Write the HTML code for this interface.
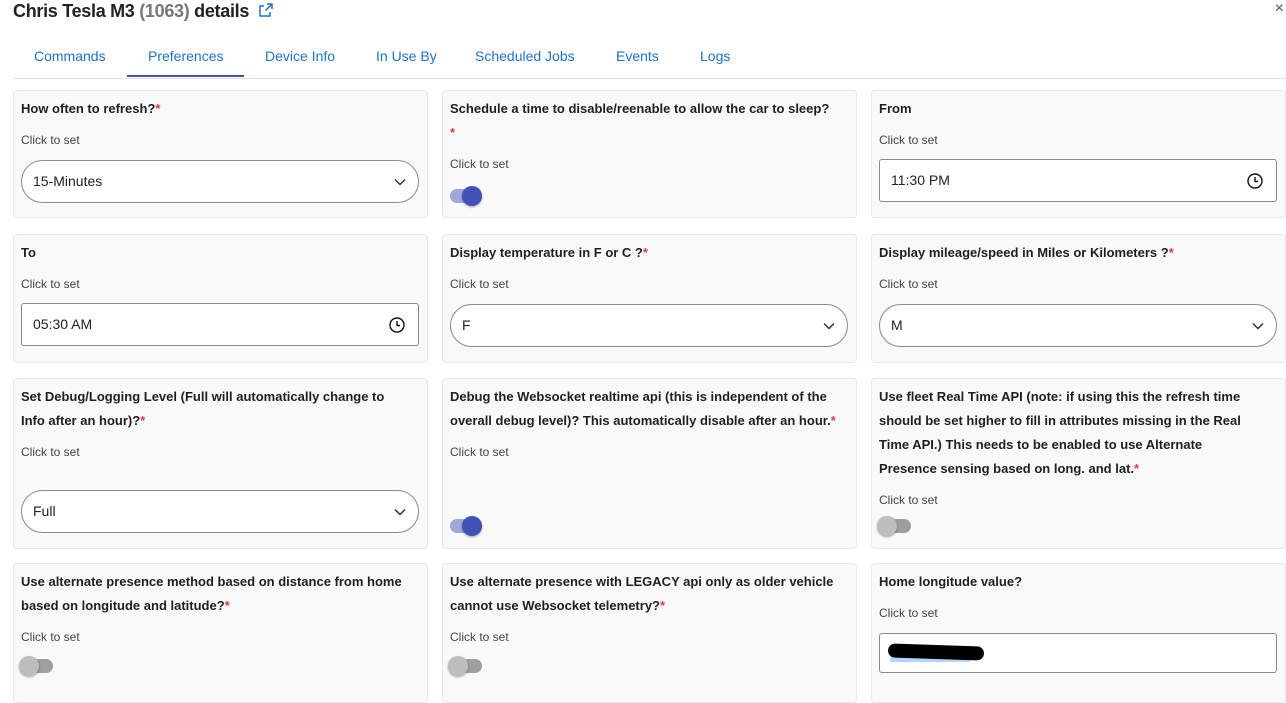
<!DOCTYPE html>
<html><head><meta charset="utf-8"><style>
*{box-sizing:border-box;margin:0;padding:0}
body{width:1286px;height:690px;overflow:hidden;background:#fff;font-family:"Liberation Sans",Arial,sans-serif;position:relative;color:#1f1f1f}
.title{position:absolute;left:13px;top:1px;font-size:18px;font-weight:bold;letter-spacing:-0.3px;color:#222}
.title .g{color:#777;font-weight:bold}
.tabs{position:absolute;left:13px;top:40px;width:1273px;height:39px;border-bottom:1px solid #e0e0e0}
.tab{position:absolute;top:8px;font-size:14px;color:#1e73c8}
.ind{position:absolute;left:114px;top:35px;width:117px;height:2px;background:#3f51b5}
.card{position:absolute;background:#f9f9f9;border:1px solid #e8e8e8;border-radius:4px;padding:0 8px}
.card h4{position:absolute;left:7px;top:6px;right:2px;font-size:13px;font-weight:bold;line-height:24px;color:#1f1f1f;white-space:nowrap}
.r{color:#e53935}
.lab{position:absolute;left:7px;font-size:12px;color:#444}
.sel{position:absolute;left:7px;right:8px;height:43px;border:1px solid #8a8a8a;border-radius:22px;background:#fff;font-size:14px;padding-left:11px;line-height:41px}
.sel svg{position:absolute;right:11px;top:14px}
.inp{position:absolute;left:7px;right:8px;height:43px;border:1px solid #8a8a8a;border-radius:3px;background:#fff;font-size:14px;padding-left:11px;line-height:41px}
.inp svg{position:absolute;right:12px;top:12px}
.tg{position:absolute;left:7px;width:32px;height:14px;border-radius:7px}
.tg i{position:absolute;top:-3px;width:20px;height:20px;border-radius:50%;box-shadow:0 1px 2px rgba(0,0,0,.35)}
.on{background:#9fa8da}.on i{left:12px;background:#3f51b5}
.off{background:#9e9e9e}.off i{left:-2px;background:#bdbdbd}
</style></head><body>
<div class="title">Chris Tesla M3 <span class="g">(1063)</span> details
<svg width="16" height="16" viewBox="0 0 16 16" style="vertical-align:-1px;margin-left:4px"><path d="M9 2h5v5M14 2L7.5 8.5M12 10v4H2V4h4" fill="none" stroke="#1e73c8" stroke-width="1.5"/></svg></div>
<div style="position:absolute;right:2px;top:0;font-size:16px;color:#555">×</div>
<div class="tabs">
<span class="tab" style="left:21px">Commands</span>
<span class="tab" style="left:135px">Preferences</span>
<span class="tab" style="left:252px">Device Info</span>
<span class="tab" style="left:363px">In Use By</span>
<span class="tab" style="left:462px">Scheduled Jobs</span>
<span class="tab" style="left:603px">Events</span>
<span class="tab" style="left:687px">Logs</span>
<div class="ind"></div></div>

<div class="card" style="left:13px;top:90px;width:415px;height:128px"><h4>How often to refresh?<span class="r">*</span></h4><div class="lab" style="top:42px">Click to set</div>
<div class="sel" style="top:69px">15-Minutes<svg width="14" height="14" viewBox="0 0 14 14"><path d="M2 4.5l5 5 5-5" fill="none" stroke="#333" stroke-width="1.5"/></svg></div></div>
<div class="card" style="left:442px;top:90px;width:415px;height:128px"><h4>Schedule a time to disable/reenable to allow the car to sleep?<br><span class="r">*</span></h4><div class="lab" style="top:66px">Click to set</div><div class="tg on" style="top:98px"><i></i></div></div>
<div class="card" style="left:871px;top:90px;width:415px;height:128px"><h4>From</h4><div class="lab" style="top:42px">Click to set</div>
<div class="inp" style="top:68px">11:30 PM<svg width="18" height="18" viewBox="0 0 18 18"><circle cx="9" cy="9" r="7" fill="none" stroke="#111" stroke-width="1.4"/><path d="M9 5v4.5h3" fill="none" stroke="#111" stroke-width="1.4"/></svg></div></div>

<div class="card" style="left:13px;top:234px;width:415px;height:129px"><h4>To</h4><div class="lab" style="top:42px">Click to set</div>
<div class="inp" style="top:68px">05:30 AM<svg width="18" height="18" viewBox="0 0 18 18"><circle cx="9" cy="9" r="7" fill="none" stroke="#111" stroke-width="1.4"/><path d="M9 5v4.5h3" fill="none" stroke="#111" stroke-width="1.4"/></svg></div></div>
<div class="card" style="left:442px;top:234px;width:415px;height:129px"><h4>Display temperature in F or C ?<span class="r">*</span></h4><div class="lab" style="top:42px">Click to set</div>
<div class="sel" style="top:69px">F<svg width="14" height="14" viewBox="0 0 14 14"><path d="M2 4.5l5 5 5-5" fill="none" stroke="#333" stroke-width="1.5"/></svg></div></div>
<div class="card" style="left:871px;top:234px;width:415px;height:129px"><h4>Display mileage/speed in Miles or Kilometers ?<span class="r">*</span></h4><div class="lab" style="top:42px">Click to set</div>
<div class="sel" style="top:69px">M<svg width="14" height="14" viewBox="0 0 14 14"><path d="M2 4.5l5 5 5-5" fill="none" stroke="#333" stroke-width="1.5"/></svg></div></div>

<div class="card" style="left:13px;top:378px;width:415px;height:171px"><h4>Set Debug/Logging Level (Full will automatically change to<br>Info after an hour)?<span class="r">*</span></h4><div class="lab" style="top:66px">Click to set</div>
<div class="sel" style="top:111px">Full<svg width="14" height="14" viewBox="0 0 14 14"><path d="M2 4.5l5 5 5-5" fill="none" stroke="#333" stroke-width="1.5"/></svg></div></div>
<div class="card" style="left:442px;top:378px;width:415px;height:171px"><h4>Debug the Websocket realtime api (this is independent of the<br>overall debug level)? This automatically disable after an hour.<span class="r">*</span></h4><div class="lab" style="top:66px">Click to set</div><div class="tg on" style="top:140px"><i></i></div></div>
<div class="card" style="left:871px;top:378px;width:415px;height:171px"><h4>Use fleet Real Time API (note: if using this the refresh time<br>should be set higher to fill in attributes missing in the Real<br>Time API.) This needs to be enabled to use Alternate<br>Presence sensing based on long. and lat.<span class="r">*</span></h4><div class="lab" style="top:114px">Click to set</div><div class="tg off" style="top:140px"><i></i></div></div>

<div class="card" style="left:13px;top:563px;width:415px;height:140px"><h4>Use alternate presence method based on distance from home<br>based on longitude and latitude?<span class="r">*</span></h4><div class="lab" style="top:66px">Click to set</div><div class="tg off" style="top:95px"><i></i></div></div>
<div class="card" style="left:442px;top:563px;width:415px;height:140px"><h4>Use alternate presence with LEGACY api only as older vehicle<br>cannot use Websocket telemetry?<span class="r">*</span></h4><div class="lab" style="top:66px">Click to set</div><div class="tg off" style="top:95px"><i></i></div></div>
<div class="card" style="left:871px;top:563px;width:415px;height:140px"><h4>Home longitude value?</h4><div class="lab" style="top:42px">Click to set</div>
<div class="inp" style="top:69px;height:40px;border-radius:3px"><div style="position:absolute;left:10px;top:12px;width:80px;height:16px;background:#b3d4fc"></div><div style="position:absolute;left:8px;top:11px;width:96px;height:14px;background:#000;border-radius:7px;transform:rotate(2deg)"></div></div></div>
</body></html>
